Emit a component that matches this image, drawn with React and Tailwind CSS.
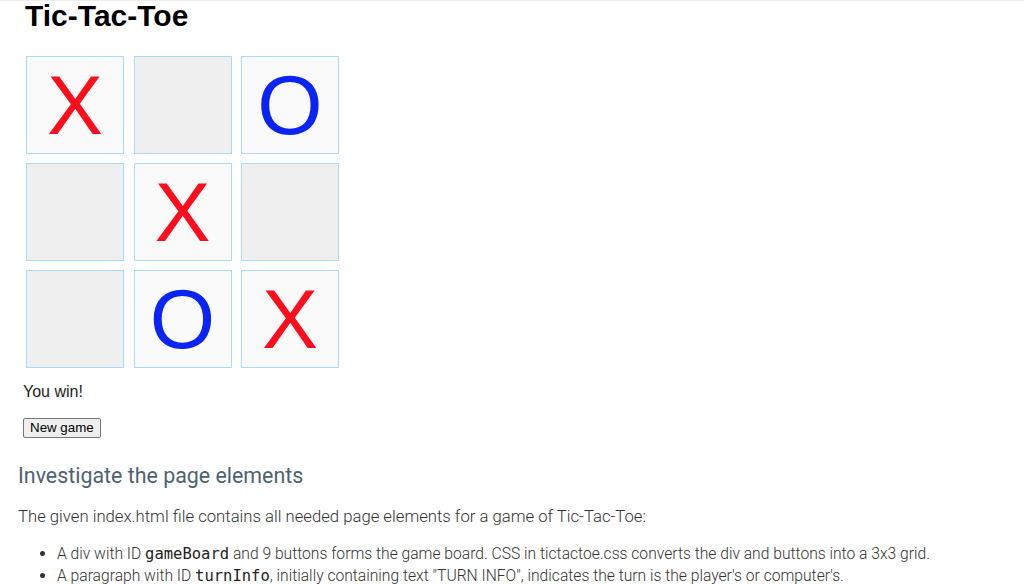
import React from "react";

const board = ["X", "", "O", "", "X", "", "", "O", "X"];

function Cell({ value }) {
  const filled = value !== "";
  return (
    <button
      className={`w-[98px] h-[98px] border border-[#a9daf6] flex items-center justify-center text-[84px] leading-none ${
        filled ? "bg-[#fafafa]" : "bg-[#efefef]"
      } ${value === "X" ? "text-[#ff0d1c]" : "text-[#0a24f6]"}`}
      style={{ fontFamily: '"Liberation Sans", Arial, sans-serif' }}
    >
      {value}
    </button>
  );
}

export default function App() {
  return (
    <div className="min-h-screen bg-white border-t border-[#ececec]">
      {/* game */}
      <div className="pl-[23px]" style={{ fontFamily: '"Liberation Sans", Arial, sans-serif' }}>
        <h1 className="text-[30px] font-bold leading-[30px] text-black pl-[2px]">Tic-Tac-Toe</h1>
        <div className="grid grid-cols-[98px_98px_98px] gap-x-[9.5px] gap-y-[9px] mt-[25px] ml-[3px] w-max">
          {board.map((v, i) => (
            <Cell key={i} value={v} />
          ))}
        </div>
        <p className="text-[16px] leading-[20px] text-[#222] mt-[14px]">You win!</p>
        <button className="mt-[16px] h-[20px] px-[6px] text-[13.33px] leading-none bg-[#efefef] border border-[#767676] rounded-[2px] text-black">
          New game
        </button>
      </div>

      {/* instructions */}
      <div className="pl-[18px]" style={{ fontFamily: 'Roboto, "Noto Sans", sans-serif' }}>
        <h2 className="mt-[23px] text-[21.4px] leading-[28px] text-[#4d6371]">Investigate the page elements</h2>
        <p className="mt-[15px] text-[16.7px] leading-[24px] font-light text-[#333]">
          The given index.html file contains all needed page elements for a game of Tic-Tac-Toe:
        </p>
        <ul className="mt-[14px] list-disc pl-[39px] text-[15.65px] leading-[22px] font-light text-[#333]">
          <li>
            A div with ID{" "}
            <code className="text-[15.5px] text-[#222]" style={{ fontFamily: '"DejaVu Sans Mono", monospace' }}>
              gameBoard
            </code>{" "}
            and 9 buttons forms the game board. CSS in tictactoe.css converts the div and buttons into a 3x3 grid.
          </li>
          <li>
            A paragraph with ID{" "}
            <code className="text-[15.5px] text-[#222]" style={{ fontFamily: '"DejaVu Sans Mono", monospace' }}>
              turnInfo
            </code>
            , initially containing text "TURN INFO", indicates the turn is the player's or computer's.
          </li>
        </ul>
      </div>
    </div>
  );
}
